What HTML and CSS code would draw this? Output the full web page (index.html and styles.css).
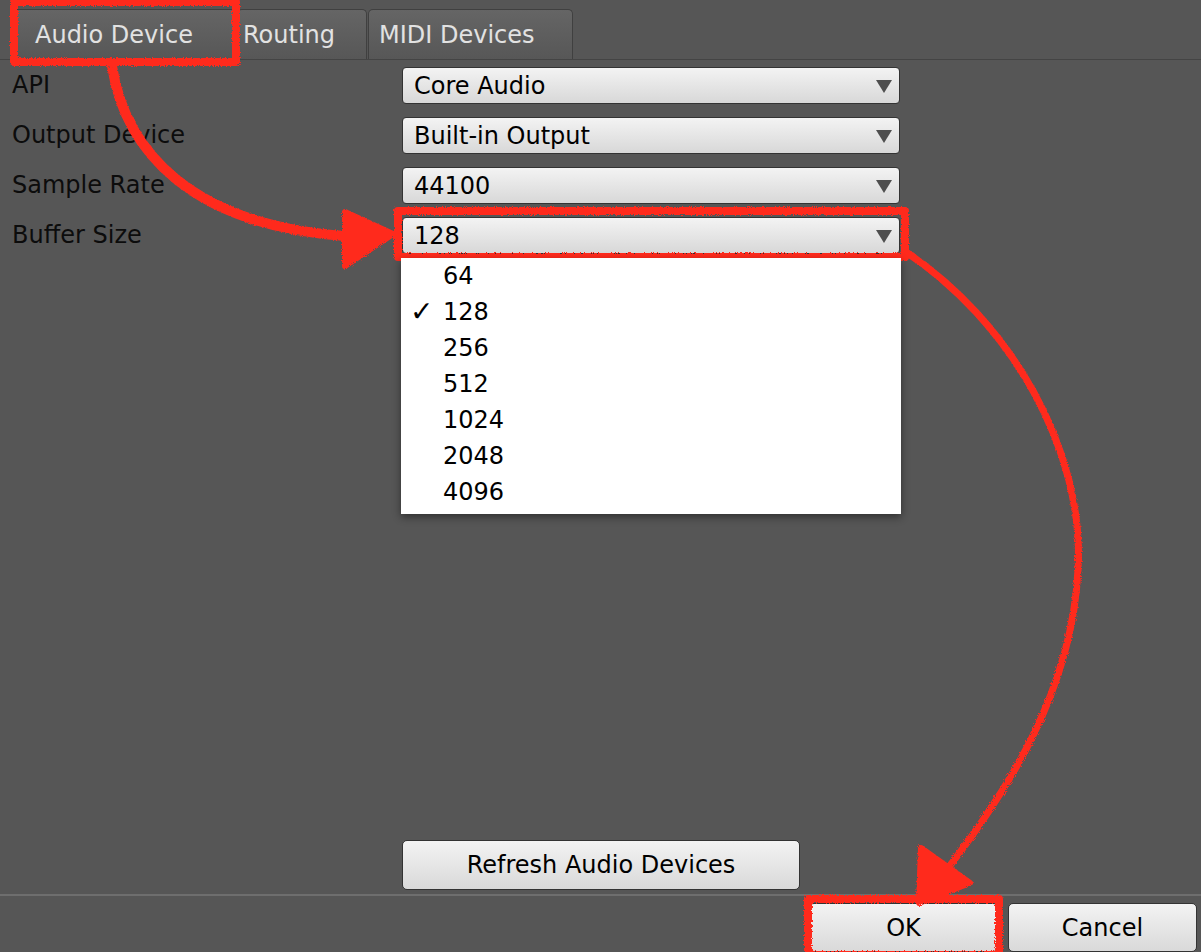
FILE: index.html
```html
<!DOCTYPE html>
<html lang="en">
<head>
  <meta charset="UTF-8">
  <title>Audio Settings</title>
  <link rel="stylesheet" href="styles.css">
</head>
<body>
  <div class="window">
    <div class="tabs">
      <div class="tab tab-audio">Audio Device</div>
      <div class="tab tab-routing">Routing</div>
      <div class="tab tab-midi">MIDI Devices</div>
    </div>

    <div class="panel">
      <div class="row">
        <label>API</label>
        <div class="combo"><span>Core Audio</span><span class="caret"></span></div>
      </div>
      <div class="row">
        <label>Output Device</label>
        <div class="combo"><span>Built-in Output</span><span class="caret"></span></div>
      </div>
      <div class="row">
        <label>Sample Rate</label>
        <div class="combo"><span>44100</span><span class="caret"></span></div>
      </div>
      <div class="row">
        <label>Buffer Size</label>
        <div class="combo open"><span>128</span><span class="caret"></span>
          <ul class="menu">
            <li>64</li>
            <li class="checked"><span class="check">✓</span>128</li>
            <li>256</li>
            <li>512</li>
            <li>1024</li>
            <li>2048</li>
            <li>4096</li>
          </ul>
        </div>
      </div>

      <div class="refresh-row">
        <button class="btn refresh">Refresh Audio Devices</button>
      </div>
    </div>

    <div class="footer">
      <button class="btn ok">OK</button>
      <button class="btn cancel">Cancel</button>
    </div>

    <!-- hand drawn annotations -->
    <svg class="marks" width="1201" height="952" viewBox="0 0 1201 952">
      <defs>
        <filter id="rough" x="-5%" y="-5%" width="110%" height="110%">
          <feTurbulence type="fractalNoise" baseFrequency="0.9" numOctaves="2" result="noise"/>
          <feDisplacementMap in="SourceGraphic" in2="noise" scale="4"/>
        </filter>
      </defs>
      <g filter="url(#rough)" stroke="#ff2a1f" fill="none" stroke-width="8" stroke-linejoin="round">
        <rect x="14" y="2" width="222" height="60"/>
        <path d="M112 66 C 125 150, 190 225, 345 236" stroke-width="10"/>
        <polygon points="345,212 345,266 393,234" fill="#ff2a1f" stroke-width="6"/>
        <rect x="398" y="211" width="507" height="46"/>
        <path d="M903 250 C 1010 320, 1085 450, 1078 570 C 1072 690, 1010 790, 935 885" stroke-width="7"/>
        <polygon points="921,848 970,883 919,903" fill="#ff2a1f" stroke-width="6"/>
        <rect x="808" y="899" width="191" height="56"/>
      </g>
    </svg>
  </div>
</body>
</html>
```

FILE: styles.css
```css
body {
  margin: 0;
  background-color: #565656;
  font-family: "DejaVu Sans", "Noto Sans", sans-serif;
  font-size: 24px;
  color: #0c0c0c;
}
.window {
  position: relative;
  width: 1201px;
  height: 952px;
  display: flex;
  flex-direction: column;
  overflow: hidden;
}
.tabs {
  height: 60px;
  display: flex;
  align-items: flex-end;
  padding-left: 12px;
  border-bottom: 1px solid #444;
  box-sizing: border-box;
}
.tab {
  height: 50px;
  line-height: 50px;
  color: #e2e2e2;
  background: linear-gradient(#656565, #575757);
  border: 1px solid #404040;
  border-bottom: none;
  border-radius: 5px 5px 0 0;
  box-sizing: border-box;
  white-space: nowrap;
}
.tab-audio {
  width: 225px;
  padding-left: 22px;
}
.tab-routing {
  width: 130px;
  padding-left: 5px;
}
.tab-midi {
  width: 205px;
  padding-left: 10px;
  margin-left: 1px;
}
.panel {
  flex: 1;
  display: flex;
  flex-direction: column;
  gap: 13px;
  padding: 7px 0 4px 12px;
}
.row {
  display: flex;
  align-items: center;
  height: 37px;
}
.row label {
  width: 390px;
  line-height: 37px;
}
.combo {
  position: relative;
  width: 498px;
  height: 37px;
  box-sizing: border-box;
  display: flex;
  align-items: center;
  justify-content: space-between;
  padding: 0 7px 0 11px;
  background: linear-gradient(#f3f3f3, #d8d8d8);
  border: 1px solid #333;
  border-radius: 4px;
  color: #000;
}
.caret {
  width: 0;
  height: 0;
  border-left: 8px solid transparent;
  border-right: 8px solid transparent;
  border-top: 13px solid #4e4e4e;
  margin-top: 2px;
}
.menu {
  position: absolute;
  top: 40px;
  left: -2px;
  width: 500px;
  margin: 0;
  padding: 0 0 4px;
  list-style: none;
  background-color: #fff;
  box-shadow: 0 3px 8px rgba(0, 0, 0, 0.45);
  z-index: 2;
}
.menu li {
  position: relative;
  height: 36px;
  line-height: 36px;
  padding-left: 42px;
  color: #000;
}
.menu .check {
  position: absolute;
  left: 9px;
  font-size: 28px;
  font-weight: bold;
}
.refresh-row {
  margin-top: auto;
  padding-left: 390px;
}
.btn {
  font-family: "DejaVu Sans", "Noto Sans", sans-serif;
  font-size: 24px;
  color: #000;
  background: linear-gradient(#f3f3f3, #d9d9d9);
  border: 1px solid #333;
  border-radius: 5px;
  box-sizing: border-box;
  padding: 0;
}
.refresh {
  width: 398px;
  height: 50px;
}
.footer {
  height: 58px;
  box-sizing: border-box;
  border-top: 2px solid #6e6e6e;
  display: flex;
  justify-content: flex-end;
  gap: 10px;
  padding: 7px 4px 0 0;
}
.ok, .cancel {
  width: 189px;
  height: 49px;
}
.marks {
  position: absolute;
  top: 0;
  left: 0;
  pointer-events: none;
}
```
